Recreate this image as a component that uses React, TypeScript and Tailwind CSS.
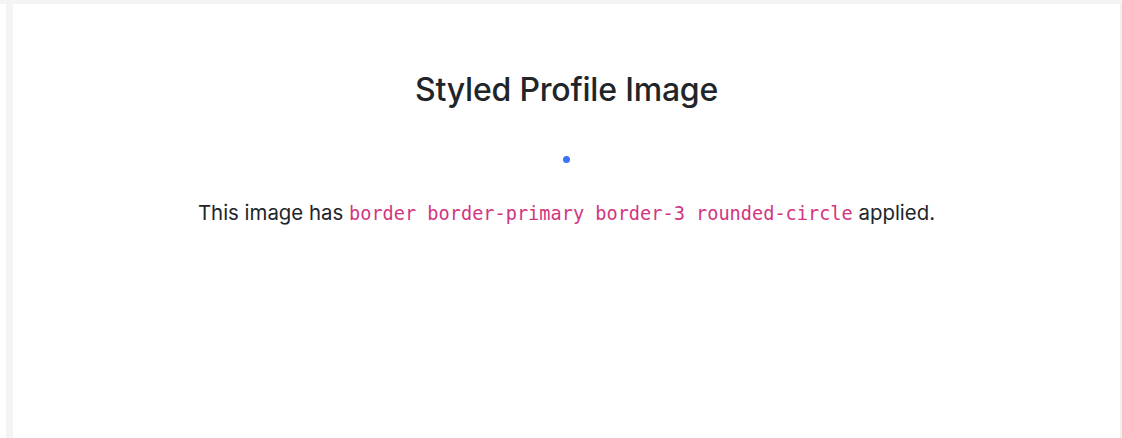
export default function App() {
  return (
    <div className="flex h-[438px] flex-col bg-white font-['Inter','Liberation_Sans',sans-serif] text-[#212529]">
      <div className="h-1 bg-[#f4f4f4]" />
      <div className="flex flex-1">
        <div className="w-[6px] bg-white" />
        <div className="w-[7px] bg-[#f4f4f4]" />
        <main className="flex flex-1 flex-col items-center pt-[67px]">
          <h2 className="text-[32px] font-medium leading-[1.2] tracking-[-0.2px]">Styled Profile Image</h2>
          <div className="mt-[47px] h-[7px] w-[7px] rounded-full bg-[#3b72f6]" />
          <p className="mt-[35px] text-[20.4px] leading-[1.5]">
            This image has{' '}
            <code className="font-['DejaVu_Sans_Mono','Liberation_Mono',monospace] text-[18.6px] text-[#d1367f]">
              border border-primary border-3 rounded-circle
            </code>{' '}
            applied.
          </p>
        </main>
        <div className="w-[2px] bg-[#f0f0f0]" />
      </div>
    </div>
  );
}
